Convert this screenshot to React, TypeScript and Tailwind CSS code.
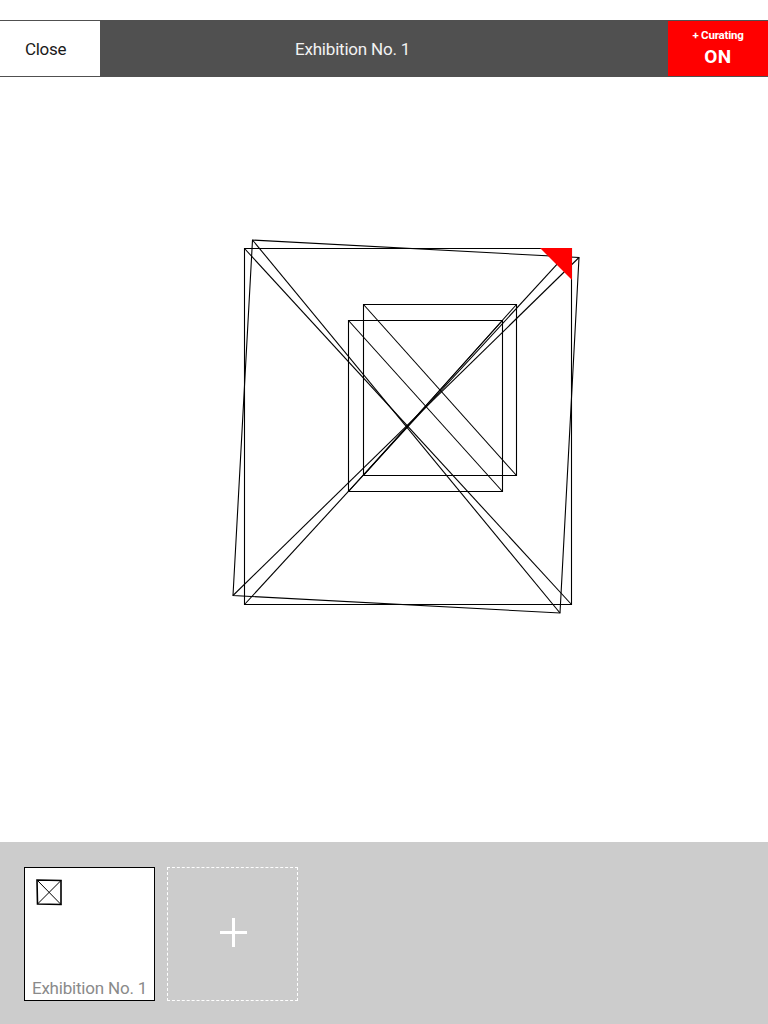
import React from "react";

const font = { fontFamily: "Roboto, 'Liberation Sans', sans-serif" };

function XBox({ pts }: { pts: [number, number][] }) {
  const [a, b, c, d] = pts;
  const poly = pts.map((p) => p.join(",")).join(" ");
  return (
    <g>
      <polygon points={poly} fill="none" stroke="#000" strokeWidth={1.1} />
      <line x1={a[0]} y1={a[1]} x2={c[0]} y2={c[1]} stroke="#000" strokeWidth={1.1} />
      <line x1={b[0]} y1={b[1]} x2={d[0]} y2={d[1]} stroke="#000" strokeWidth={1.1} />
    </g>
  );
}

export default function App() {
  return (
    <div className="w-[768px] h-[1024px] bg-white flex flex-col overflow-hidden" style={font}>
      <div className="h-[20px] shrink-0" />
      <div className="h-[57px] shrink-0 bg-[#505050] flex py-[1px]">
        <div className="w-[100px] bg-white flex items-center pl-[25px] text-[17px] text-[#1a1a1a] pt-[2px] tracking-[-0.3px]">
          Close
        </div>
        <div className="flex-1 flex items-center pl-[195px] text-[17px] text-[#f2f2f2] pt-[2px] tracking-[-0.2px]">
          Exhibition No. 1
        </div>
        <div className="w-[100px] bg-[#ff0000] flex flex-col items-center justify-center text-white leading-none pb-[1px]">
          <div className="text-[11.5px] font-bold tracking-[-0.2px]">+ Curating</div>
          <div className="text-[19px] font-bold mt-[5px] tracking-[0.5px]">ON</div>
        </div>
      </div>
      <div className="flex-1 relative">
        <svg width="768" height="765" viewBox="0 77 768 765" className="block">
          <XBox pts={[[244.5, 248.5], [571.5, 248.5], [571.5, 604.5], [244.5, 604.5]]} />
          <XBox pts={[[252.5, 240], [579, 257.5], [560, 613], [233, 595.5]]} />
          <XBox pts={[[363.5, 304.5], [516.5, 304.5], [516.5, 475.5], [363.5, 475.5]]} />
          <XBox pts={[[348.5, 320.5], [502.5, 320.5], [502.5, 491.5], [348.5, 491.5]]} />
          <polygon points="540,248 572,248 572,280" fill="#ff0000" />
        </svg>
      </div>
      <div className="h-[182px] shrink-0 bg-[#cccccc] flex gap-[12px] pl-[24px] pt-[25px]">
        <div className="w-[131px] h-[134px] bg-white border border-black flex flex-col justify-between">
          <svg width="40" height="40" viewBox="0 0 40 40" className="block ml-[10px] mt-[10px]">
            <polygon points="2,2 26,2.5 26,26.5 2.5,26" fill="none" stroke="#000" strokeWidth={1.6} />
            <line x1="2" y1="2" x2="26" y2="26.5" stroke="#000" strokeWidth={1} />
            <line x1="26" y1="2.5" x2="2.5" y2="26" stroke="#000" strokeWidth={1} />
          </svg>
          <div className="text-[17px] text-[#8a8a8a] text-center pb-[1px] leading-[22px] tracking-[-0.2px]">Exhibition No. 1</div>
        </div>
        <div className="w-[131px] h-[134px] border border-dashed border-white flex items-center justify-center pb-[3px] pl-[1px]">
          <div className="relative w-[27px] h-[29px]">
            <div className="absolute left-0 right-0 top-[13px] h-[3px] bg-white" />
            <div className="absolute top-0 bottom-0 left-[12px] w-[3px] bg-white" />
          </div>
        </div>
      </div>
    </div>
  );
}
